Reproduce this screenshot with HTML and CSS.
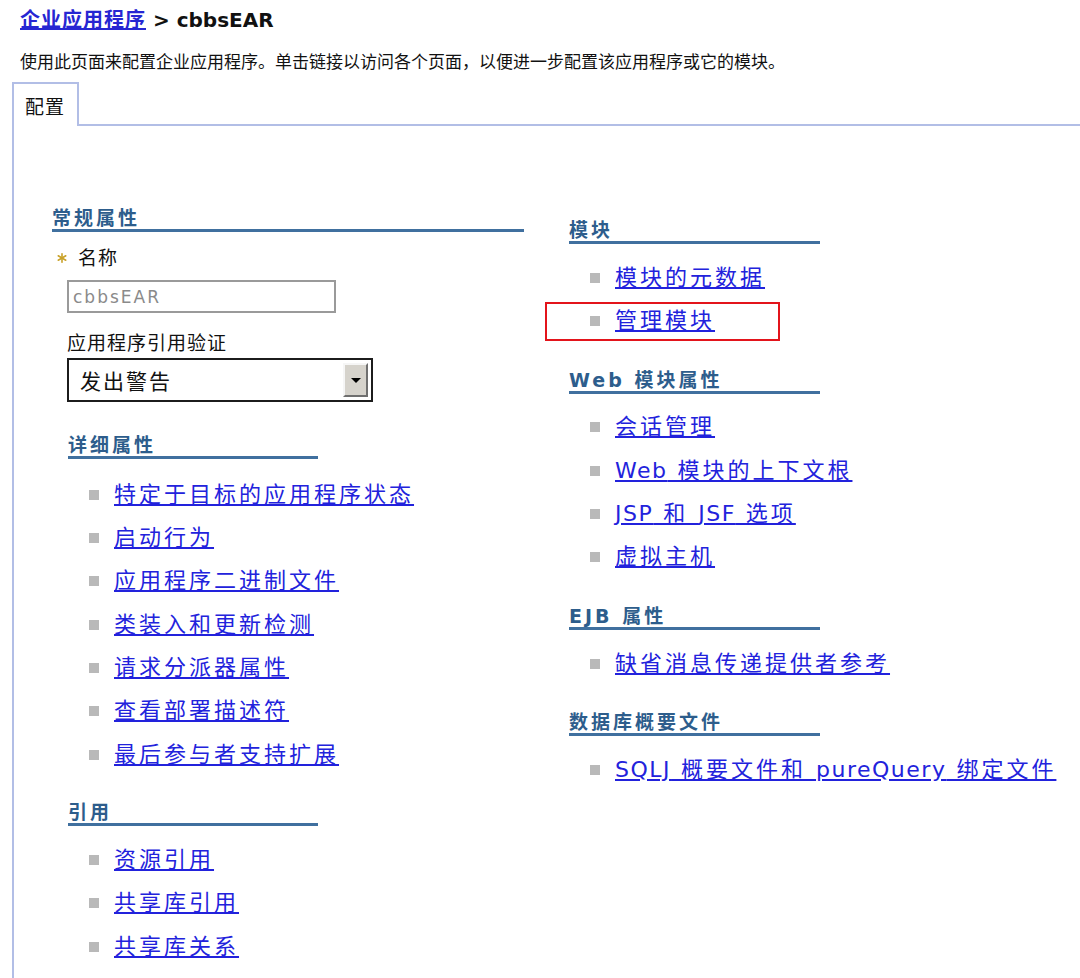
FILE: index.html
```html
<!DOCTYPE html>
<html lang="zh-CN">
<head>
<meta charset="utf-8">
<title>企业应用程序 &gt; cbbsEAR</title>
<link rel="stylesheet" href="styles.css">
</head>
<body>
<div class="crumb"><a href="#" class="crumb-link">企业应用程序</a> &gt; cbbsEAR</div>
<p class="desc">使用此页面来配置企业应用程序。单击链接以访问各个页面，以便进一步配置该应用程序或它的模块。</p>
<div class="tabs"><div class="tab">配置</div><div class="tab-fill"></div></div>
<div class="panel">
  <div class="col-left">
    <h3 class="sec-head">常规属性</h3>
    <div class="field-name">
      <svg class="star" width="10" height="10" viewBox="0 0 10 10"><g stroke="#c9a22a" stroke-width="1.6" stroke-linecap="round"><line x1="5" y1="0.8" x2="5" y2="9.2"/><line x1="1.2" y1="2.8" x2="8.8" y2="7.2"/><line x1="1.2" y1="7.2" x2="8.8" y2="2.8"/></g></svg>
      <span>名称</span>
    </div>
    <input class="name-input" value="cbbsEAR" readonly>
    <div class="field-label">应用程序引用验证</div>
    <div class="select"><span class="select-text">发出警告</span><span class="select-btn"><span class="tri"></span></span></div>
    <div class="sub">
      <h3 class="sec-head">详细属性</h3>
      <ul class="links">
        <li><a href="#">特定于目标的应用程序状态</a></li>
        <li><a href="#">启动行为</a></li>
        <li><a href="#">应用程序二进制文件</a></li>
        <li><a href="#">类装入和更新检测</a></li>
        <li><a href="#">请求分派器属性</a></li>
        <li><a href="#">查看部署描述符</a></li>
        <li><a href="#">最后参与者支持扩展</a></li>
      </ul>
      <h3 class="sec-head">引用</h3>
      <ul class="links">
        <li><a href="#">资源引用</a></li>
        <li><a href="#">共享库引用</a></li>
        <li><a href="#">共享库关系</a></li>
      </ul>
    </div>
  </div>
  <div class="col-right">
    <h3 class="sec-head">模块</h3>
    <ul class="links">
      <li><a href="#">模块的元数据</a></li>
      <li class="marked"><a href="#">管理模块</a><span class="mark"></span></li>
    </ul>
    <h3 class="sec-head">Web 模块属性</h3>
    <ul class="links">
      <li><a href="#">会话管理</a></li>
      <li><a href="#"><span class="lat">Web</span> 模块的上下文根</a></li>
      <li><a href="#"><span class="lat">JSP</span> 和 <span class="lat">JSF</span> 选项</a></li>
      <li><a href="#">虚拟主机</a></li>
    </ul>
    <h3 class="sec-head">EJB 属性</h3>
    <ul class="links">
      <li><a href="#">缺省消息传递提供者参考</a></li>
    </ul>
    <h3 class="sec-head">数据库概要文件</h3>
    <ul class="links">
      <li><a href="#"><span class="lat">SQLJ</span> 概要文件和 <span class="lat">pureQuery</span> 绑定文件</a></li>
    </ul>
  </div>
</div>
</body>
</html>
```
FILE: styles.css
```css
html, body {
  margin: 0;
  padding: 0;
  background: #ffffff;
}
body {
  font-family: "DejaVu Sans", "Noto Sans CJK SC", sans-serif;
  color: #111111;
  overflow: hidden;
}
.crumb {
  margin: 6px 0 0 20px;
  font-size: 20px;
  line-height: 28px;
  font-weight: bold;
  white-space: nowrap;
}
.crumb-link {
  color: #2626d2;
  text-decoration: underline;
  letter-spacing: 1px;
}
.desc {
  margin: 16px 0 0 20px;
  font-size: 17px;
  line-height: 24px;
  white-space: nowrap;
}
.tabs {
  display: flex;
  margin-top: 8px;
  padding-left: 12px;
}
.tab {
  border: 2px solid #b2bee6;
  border-bottom: none;
  padding: 11px 12px 7px 11px;
  font-size: 19px;
  line-height: 24px;
  letter-spacing: 1px;
}
.tab-fill {
  flex: 1;
  border-bottom: 2px solid #b2bee6;
}
.panel {
  box-sizing: border-box;
  margin-left: 12px;
  border-left: 2px solid #b2bee6;
  padding: 81px 0 0 38px;
  display: flex;
  gap: 45px;
  min-height: 852px;
}
.col-left {
  flex: 0 0 472px;
  min-width: 0;
}
.col-right {
  flex: 0 0 251px;
  width: 251px;
  min-width: 0;
  margin-top: 12px;
}
.sec-head {
  margin: 0;
  font-size: 19px;
  line-height: 22px;
  font-weight: bold;
  color: #2d5d8c;
  letter-spacing: 3px;
  border-bottom: 3px solid #40709f;
  white-space: nowrap;
}
.field-name {
  display: flex;
  align-items: center;
  gap: 11px;
  margin: 13px 0 0 5px;
  font-size: 19px;
  line-height: 26px;
  letter-spacing: 1px;
}
.star {
  flex: none;
}
.name-input {
  display: block;
  box-sizing: border-box;
  width: 269px;
  height: 33px;
  margin: 9px 0 0 15px;
  padding: 0 0 0 4px;
  border: 2px solid #9a9a9a;
  border-radius: 0;
  outline: none;
  background: #ffffff;
  font-family: "DejaVu Sans", sans-serif;
  font-size: 17px;
  letter-spacing: 2px;
  color: #8a8a8a;
}
.field-label {
  margin: 18px 0 0 15px;
  font-size: 19px;
  line-height: 24px;
  letter-spacing: 1px;
}
.select {
  box-sizing: border-box;
  width: 306px;
  height: 44px;
  margin: 3px 0 0 15px;
  border: 2px solid #1c1c1c;
  display: flex;
  align-items: center;
  justify-content: space-between;
  padding: 0 3px 0 11px;
}
.select-text {
  font-size: 21px;
  letter-spacing: 2px;
}
.select-btn {
  box-sizing: border-box;
  width: 25px;
  height: 34px;
  background: #d6d3cc;
  border: 2px solid;
  border-color: #f6f6f6 #6f6f6f #6f6f6f #f6f6f6;
  display: flex;
  align-items: center;
  justify-content: center;
}
.tri {
  width: 0;
  height: 0;
  border-left: 5px solid transparent;
  border-right: 5px solid transparent;
  border-top: 5px solid #000000;
}
.sub {
  width: 250px;
  margin: 32px 0 0 16px;
}
.links {
  list-style: none;
  margin: 14px 0 0 0;
  padding: 0 0 0 21px;
}
.col-left .links + .sec-head {
  margin-top: 25px;
}
.sub .sec-head + .links + .sec-head + .links {
  margin-top: 12px;
}
.col-right .links {
  margin-top: 12px;
}
.col-right .links + .sec-head {
  margin-top: 26px;
}
.links li {
  height: 43.33px;
  display: flex;
  align-items: center;
  gap: 15px;
  white-space: nowrap;
}
.links li::before {
  content: "";
  flex: none;
  width: 10px;
  height: 10px;
  background: #b9b9b9;
}
.links a {
  font-size: 22px;
  line-height: 26px;
  letter-spacing: 3px;
  color: #2222dc;
  text-decoration: underline;
}
.links .lat {
  letter-spacing: 1.5px;
}
.marked {
  position: relative;
}
.mark {
  position: absolute;
  left: -45px;
  top: 3px;
  width: 235px;
  height: 39px;
  box-sizing: border-box;
  border: 2px solid #e3141b;
}
```
